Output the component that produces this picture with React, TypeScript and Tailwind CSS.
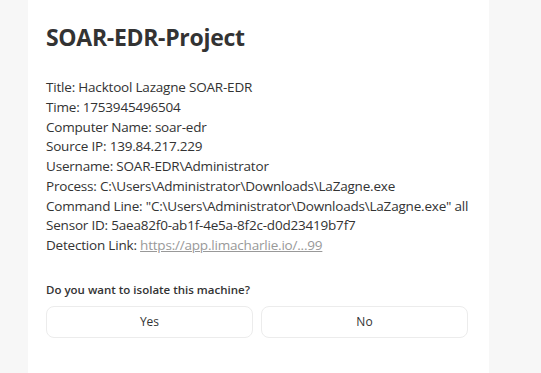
const fields: [string, string][] = [
  ["Title", "Hacktool Lazagne SOAR-EDR"],
  ["Time", "1753945496504"],
  ["Computer Name", "soar-edr"],
  ["Source IP", "139.84.217.229"],
  ["Username", "SOAR-EDR\\Administrator"],
  ["Process", "C:\\Users\\Administrator\\Downloads\\LaZagne.exe"],
  ["Command Line", "\"C:\\Users\\Administrator\\Downloads\\LaZagne.exe\" all"],
  ["Sensor ID", "5aea82f0-ab1f-4e5a-8f2c-d0d23419b7f7"],
];

export default function App() {
  return (
    <div
      className="h-[373px] overflow-hidden bg-[#f7f7f7]"
      style={{ fontFamily: '"Open Sans", "Noto Sans", sans-serif' }}
    >
      <div className="ml-[28px] w-[461px] h-full bg-white pl-[18px] pr-[21px] pt-[21px] text-[#333333]">
        <h1 className="text-[23px] font-bold leading-[32px] tracking-[-0.3px]">SOAR-EDR-Project</h1>

        <div className="mt-[25px] text-[13.5px] leading-[19.75px] tracking-[-0.2px]">
          {fields.map(([k, v]) => (
            <div key={k} className="whitespace-nowrap">
              {k}: {v}
            </div>
          ))}
          <div className="whitespace-nowrap">
            Detection Link:{" "}
            <a href="#" className="text-[#999999] underline">
              https://app.limacharlie.io/...99
            </a>
          </div>
        </div>

        <p className="mt-[26px] text-[11.5px] font-semibold leading-[16px]">
          Do you want to isolate this machine?
        </p>

        <div className="mt-[8px] flex gap-[8px]">
          <button className="h-[32px] flex-1 rounded-[8px] border border-[#ececec] bg-white text-[12px]">
            Yes
          </button>
          <button className="h-[32px] flex-1 rounded-[8px] border border-[#ececec] bg-white text-[12px]">
            No
          </button>
        </div>
      </div>
    </div>
  );
}
